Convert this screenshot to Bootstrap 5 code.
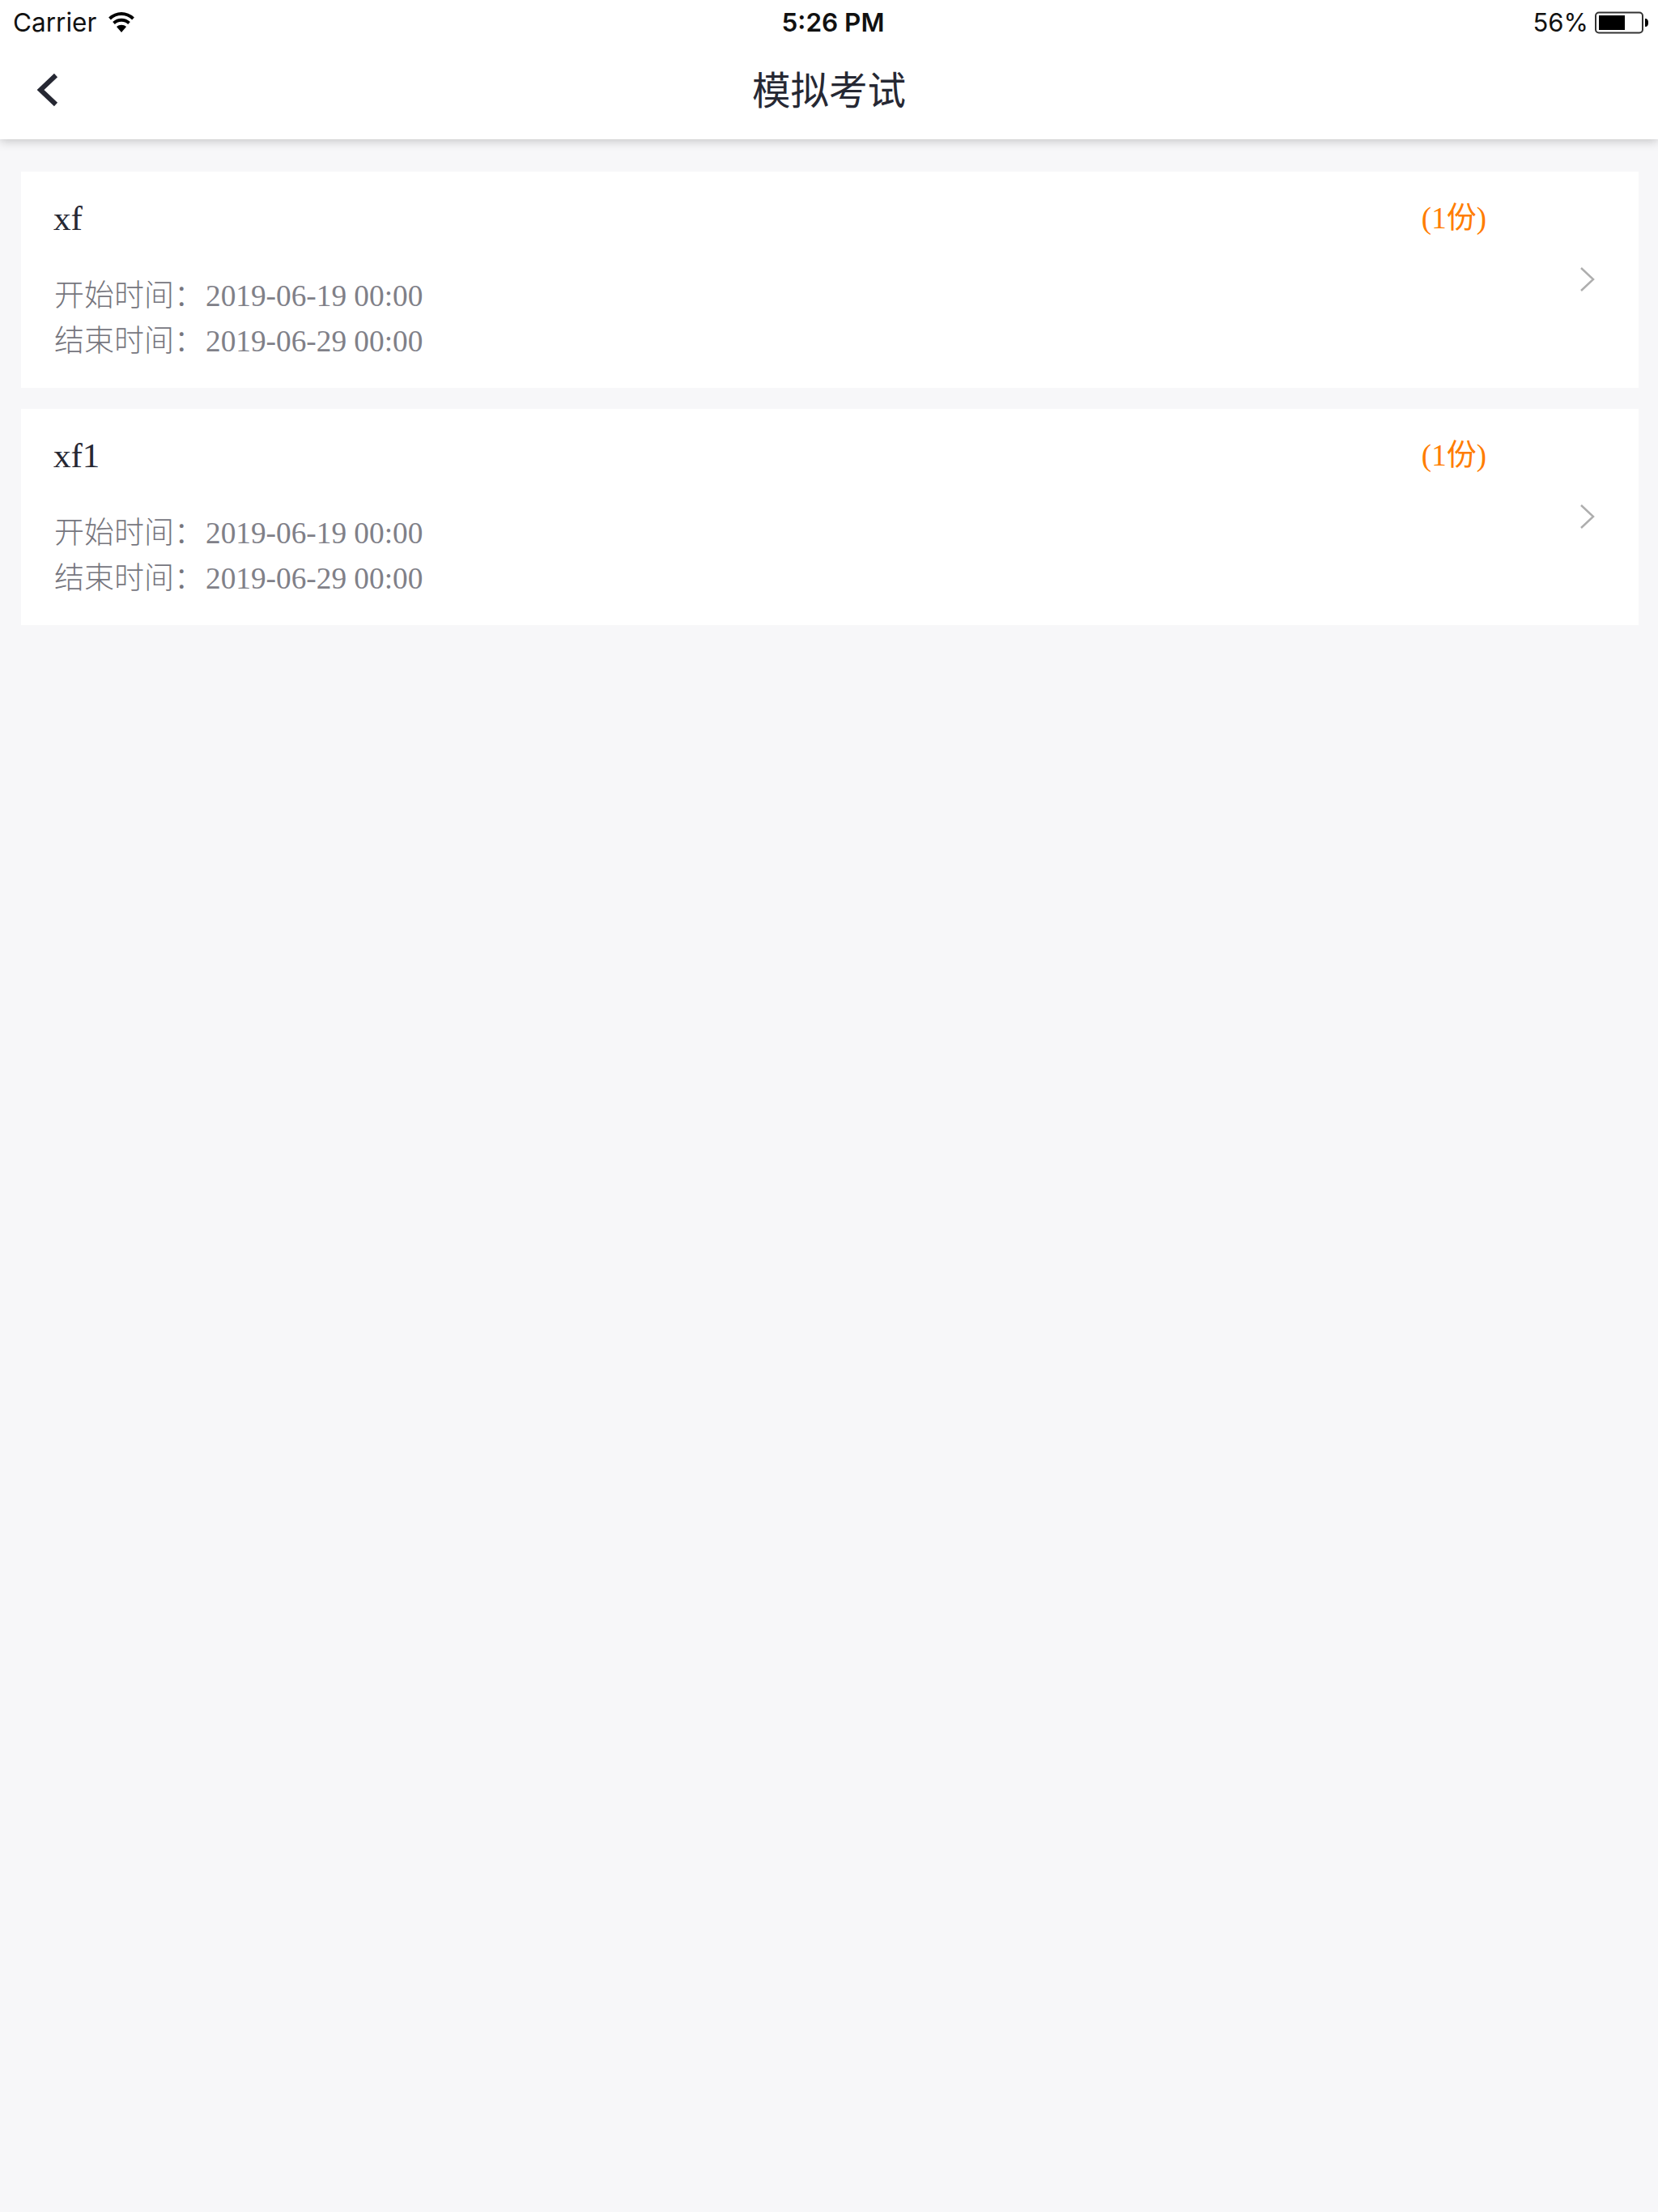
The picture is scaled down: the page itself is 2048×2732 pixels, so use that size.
<!DOCTYPE html>
<html lang="zh">
<head>
<meta charset="utf-8">
<title>模拟考试</title>
<link href="https://cdn.jsdelivr.net/npm/bootstrap@5.3.0/dist/css/bootstrap.min.css" rel="stylesheet">
<style>
html,body{height:100%;}
body{background:#f7f7f9;font-family:"Liberation Serif","Noto Sans CJK SC",serif;}
.app-top{background:#fff;height:172px;box-shadow:0 2px 12px rgba(0,0,0,.22);position:relative;}
.status-row{height:56px;padding:0 10px 0 16px;font-family:Inter,"Liberation Sans",sans-serif;font-size:31.500px;color:#111;line-height:56px;}
.status-side{flex:1 1 0;}
.status-wifi{margin-left:6px;}
.status-pct{font-size:31px;}
.status-time{font-weight:600;font-size:31.500px;margin-left:4px;}
.title-row{height:116px;}
.back-btn{width:116px;padding-left:44px;padding-bottom:6px;}
.page-title{font-family:"Noto Sans CJK SC",sans-serif;font-size:47.500px;color:#262833;line-height:1;margin:0;font-weight:400;padding-bottom:10px;}
.back-slot{flex:1 1 0;}
.list-wrap{padding:40px 24px 0 26px;gap:26px;}
.exam-card{background:#fff;height:267px;border:0;border-radius:0;padding:0 53px 0 41px;}
.exam-main{flex:1 1 auto;align-self:flex-start;}
.exam-head{height:114px;margin-bottom:12px;padding-right:115px;}
.exam-name{font-size:43px;color:#262833;line-height:1;margin-left:-1px;}
.exam-count{font-size:37px;color:#ff7d00;line-height:1;}
.exam-line{font-size:37.300px;color:#808088;line-height:56px;height:56px;}
.cn-label{font-family:"Noto Sans CJK SC",sans-serif;font-size:37px;font-weight:300;line-height:1;color:#76767e;margin-right:2px;}
.go-mark{margin-bottom:2px;}
</style>
</head>
<body>
<header class="app-top">
  <div class="status-row d-flex align-items-center">
    <div class="status-side d-flex align-items-center gap-2">
      <span>Carrier</span>
      <svg class="status-wifi" width="34" height="26" viewBox="0 0 34 26"><path d="M17 25 11 18c3.400-3 8.600-3 12 0z" fill="#000"/><path d="M7.500 13.500c5.500-5 13.500-5 19 0M2.500 8c8.500-8 20.500-8 29 0" fill="none" stroke="#000" stroke-width="4"/></svg>
    </div>
    <div class="status-time">5:26 PM</div>
    <div class="status-side d-flex align-items-center justify-content-end gap-2">
      <span class="status-pct">56%</span>
      <svg width="68" height="28" viewBox="0 0 68 28"><rect x="1" y="1.500" width="58" height="25" rx="4" fill="none" stroke="#333" stroke-width="2"/><rect x="5" y="5" width="32" height="18" fill="#000"/><path d="M62 9c3 0 4 2 4 5s-1 5-4 5z" fill="#000"/></svg>
    </div>
  </div>
  <div class="title-row d-flex align-items-center">
    <div class="back-slot">
      <div class="back-btn">
        <svg width="30" height="44" viewBox="0 0 30 44" class="d-block"><path d="M25 4 6 22l19 18" fill="none" stroke="#262833" stroke-width="6"/></svg>
      </div>
    </div>
    <h1 class="page-title">模拟考试</h1>
    <div class="back-slot"></div>
  </div>
</header>
<main class="list-wrap d-flex flex-column">
  <section class="exam-card card flex-row align-items-center">
    <div class="exam-main">
      <div class="exam-head d-flex align-items-center justify-content-between">
        <span class="exam-name">xf</span>
        <span class="exam-count">(1份)</span>
      </div>
      <div class="exam-line"><span class="cn-label">开始时间：</span>2019-06-19 00:00</div>
      <div class="exam-line"><span class="cn-label">结束时间：</span>2019-06-29 00:00</div>
    </div>
    <svg class="go-mark" width="20" height="32" viewBox="0 0 20 32"><path d="M2 2l15 14L2 30" fill="none" stroke="#aeaeae" stroke-width="2.500"/></svg>
  </section>
  <section class="exam-card card flex-row align-items-center">
    <div class="exam-main">
      <div class="exam-head d-flex align-items-center justify-content-between">
        <span class="exam-name">xf1</span>
        <span class="exam-count">(1份)</span>
      </div>
      <div class="exam-line"><span class="cn-label">开始时间：</span>2019-06-19 00:00</div>
      <div class="exam-line"><span class="cn-label">结束时间：</span>2019-06-29 00:00</div>
    </div>
    <svg class="go-mark" width="20" height="32" viewBox="0 0 20 32"><path d="M2 2l15 14L2 30" fill="none" stroke="#aeaeae" stroke-width="2.500"/></svg>
  </section>
</main>
<script src="https://cdn.jsdelivr.net/npm/bootstrap@5.3.0/dist/js/bootstrap.bundle.min.js"></script>
</body>
</html>
